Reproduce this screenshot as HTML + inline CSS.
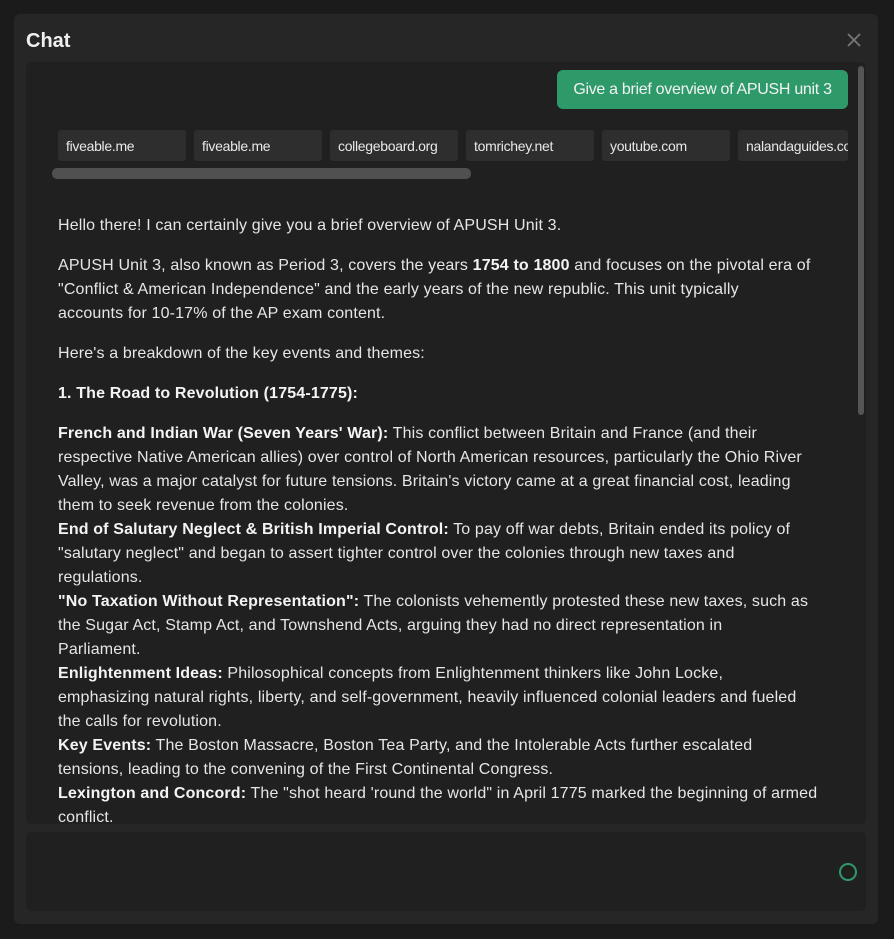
<!DOCTYPE html>
<html><head><meta charset="utf-8"><style>
*{box-sizing:border-box;margin:0;padding:0}
body{width:894px;height:939px;background:#1b1b1b;font-family:"Liberation Sans",sans-serif;color:#e8e8e8;position:relative;overflow:hidden}
.panel{position:absolute;left:14px;top:14px;width:864px;height:910px;background:#262626;border-radius:6px}
.title{position:absolute;left:26px;top:30px;font-size:20px;font-weight:bold;color:#f0f0f0}
.close{position:absolute;left:846px;top:32px}
.content{position:absolute;left:26px;top:62px;width:840px;height:762px;background:#202020;border-radius:5px;overflow:hidden}
.vscroll{position:absolute;left:832px;top:4px;width:6px;height:349px;background:#555;border-radius:3px}
.bubble{position:absolute;left:531px;top:8px;width:291px;height:39px;background:#2e9a6a;border-radius:6px;font-size:16px;line-height:40px;text-align:center;color:#f2f2f2;letter-spacing:-0.3px}
.chip{position:absolute;top:68px;width:128px;height:31px;background:#2e2e2e;border-radius:3px;font-size:14px;line-height:32px;padding-left:8px;color:#e8e8e8;white-space:nowrap;overflow:hidden;letter-spacing:-0.3px}
.hscroll{position:absolute;left:26px;top:106px;width:419px;height:11px;background:#505050;border-radius:5px}
.text{position:absolute;left:32px;top:152px;width:800px;font-size:16px;line-height:24px;letter-spacing:0.15px;color:#e6e6e6;white-space:nowrap}
.text p{margin-bottom:16px}
.text b{color:#f4f4f4}
.input{position:absolute;left:26px;top:832px;width:840px;height:79px;background:#202020;border-radius:5px}
.ring{position:absolute;left:839px;top:863px;width:18px;height:18px;border:2px solid #2e9a6a;border-radius:50%}
</style></head><body>
<div class="panel"></div>
<div class="title">Chat</div>
<svg class="close" width="16" height="16" viewBox="0 0 16 16"><path d="M2 2L14 14M14 2L2 14" stroke="#777" stroke-width="1.8"/></svg>
<div class="content">
<div class="vscroll"></div>
<div class="bubble">Give a brief overview of APUSH unit 3</div>
<div class="chip" style="left:32px">fiveable.me</div>
<div class="chip" style="left:168px">fiveable.me</div>
<div class="chip" style="left:304px">collegeboard.org</div>
<div class="chip" style="left:440px">tomrichey.net</div>
<div class="chip" style="left:576px">youtube.com</div>
<div class="chip" style="left:712px;width:110px">nalandaguides.com</div>
<div class="hscroll"></div>
<div class="text">
<p>Hello there! I can certainly give you a brief overview of APUSH Unit 3.</p>
<p>APUSH Unit 3, also known as Period 3, covers the years <b>1754 to 1800</b> and focuses on the pivotal era of<br>"Conflict &amp; American Independence" and the early years of the new republic. This unit typically<br>accounts for 10-17% of the AP exam content.</p>
<p>Here's a breakdown of the key events and themes:</p>
<p><b>1. The Road to Revolution (1754-1775):</b></p>
<div><b>French and Indian War (Seven Years' War):</b> This conflict between Britain and France (and their<br>respective Native American allies) over control of North American resources, particularly the Ohio River<br>Valley, was a major catalyst for future tensions. Britain's victory came at a great financial cost, leading<br>them to seek revenue from the colonies.</div>
<div><b>End of Salutary Neglect &amp; British Imperial Control:</b> To pay off war debts, Britain ended its policy of<br>"salutary neglect" and began to assert tighter control over the colonies through new taxes and<br>regulations.</div>
<div><b>"No Taxation Without Representation":</b> The colonists vehemently protested these new taxes, such as<br>the Sugar Act, Stamp Act, and Townshend Acts, arguing they had no direct representation in<br>Parliament.</div>
<div><b>Enlightenment Ideas:</b> Philosophical concepts from Enlightenment thinkers like John Locke,<br>emphasizing natural rights, liberty, and self-government, heavily influenced colonial leaders and fueled<br>the calls for revolution.</div>
<div><b>Key Events:</b> The Boston Massacre, Boston Tea Party, and the Intolerable Acts further escalated<br>tensions, leading to the convening of the First Continental Congress.</div>
<div><b>Lexington and Concord:</b> The "shot heard 'round the world" in April 1775 marked the beginning of armed<br>conflict.</div>
</div>
</div>
<div class="input"></div>
<div class="ring"></div>
</body></html>
